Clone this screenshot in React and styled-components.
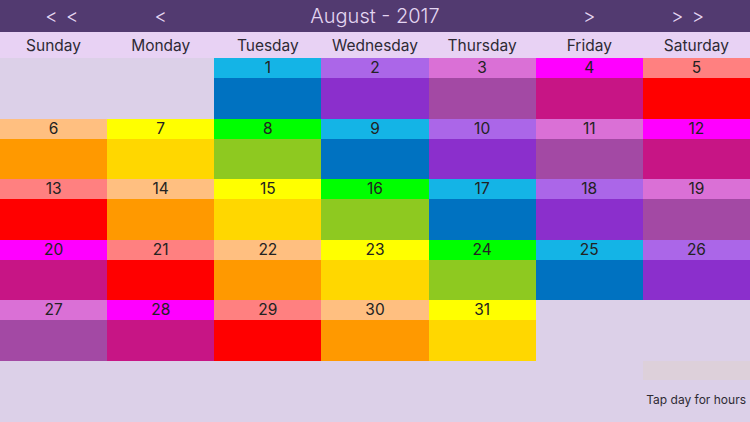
import React from "react";
import styled, { createGlobalStyle } from "styled-components";

const Global = createGlobalStyle`
  html, body { margin: 0; padding: 0; }
  body { background: #dcd0e8; font-family: Inter, "Noto Sans", "Liberation Sans", sans-serif; }
`;

const Page = styled.div`
  width: 750px;
  height: 422px;
  background: #dcd0e8;
  display: flex;
  flex-direction: column;
  overflow: hidden;
`;

const Header = styled.div`
  height: 32px;
  background: #523a70;
  display: grid;
  grid-template-columns: repeat(7, 1fr);
  align-items: center;
  color: #e4d6f2;
`;

const Nav = styled.div`
  text-align: center;
  font-size: 19px;
  font-weight: 300;
  letter-spacing: ${(p) => (p.$double ? "1.5px" : "0")};
  padding-top: 1px;
  padding-left: ${(p) => (p.$inset === "left" ? "18px" : "0")};
  padding-right: ${(p) => (p.$inset === "right" ? "16px" : "0")};
`;

const Title = styled.div`
  grid-column: span 3;
  text-align: center;
  font-size: 20px;
  font-weight: 300;
`;

const DayNames = styled.div`
  height: 26px;
  background: #e8d2f4;
  display: grid;
  grid-template-columns: repeat(7, 1fr);
  align-items: center;
`;

const DayName = styled.div`
  text-align: center;
  font-size: 15.5px;
  color: #2e2a34;
  padding-top: 1px;
`;

const Grid = styled.div`
  display: grid;
  grid-template-columns: repeat(7, 1fr);
  grid-auto-rows: 60.6px;
`;

const Cell = styled.div`
  display: flex;
  flex-direction: column;
`;

const CellTop = styled.div`
  height: 20px;
  background: ${(p) => p.$c};
  text-align: center;
  font-size: 15.5px;
  line-height: 20px;
  color: #222;
`;

const CellBody = styled.div`
  flex: 1;
  background: ${(p) => p.$c};
`;

const Footer = styled.div`
  display: grid;
  grid-template-columns: repeat(7, 1fr);
  grid-template-rows: 19px auto;
`;

const HoursBar = styled.div`
  grid-column: 7;
  background: #ddd0da;
`;

const Hint = styled.div`
  grid-column: 1 / -1;
  text-align: right;
  font-size: 12px;
  color: #2e2a34;
  padding: 12px 4px 0 0;
`;

const palette = [
  ["#14b4e6", "#0072c1"],
  ["#ab66e8", "#8b2fcc"],
  ["#da70d6", "#a349a4"],
  ["#ff00ff", "#c71585"],
  ["#ff8080", "#ff0000"],
  ["#ffbf80", "#ff9900"],
  ["#ffff00", "#ffd700"],
  ["#00ff00", "#8ec920"],
];

const days = ["Sunday", "Monday", "Tuesday", "Wednesday", "Thursday", "Friday", "Saturday"];

export default function App() {
  const cells = [];
  for (let i = 0; i < 2; i++) cells.push(null);
  for (let d = 1; d <= 31; d++) cells.push(d);
  return (
    <Page>
      <Global />
      <Header>
        <Nav $double $inset="left">&lt; &lt;</Nav>
        <Nav>&lt;</Nav>
        <Title>August - 2017</Title>
        <Nav>&gt;</Nav>
        <Nav $double $inset="right">&gt; &gt;</Nav>
      </Header>
      <DayNames>
        {days.map((d) => (
          <DayName key={d}>{d}</DayName>
        ))}
      </DayNames>
      <Grid>
        {cells.map((d, i) => {
          if (d === null) return <Cell key={"e" + i} />;
          const [top, body] = palette[(d - 1) % 8];
          return (
            <Cell key={d}>
              <CellTop $c={top}>{d}</CellTop>
              <CellBody $c={body} />
            </Cell>
          );
        })}
      </Grid>
      <Footer>
        <HoursBar />
        <Hint>Tap day for hours</Hint>
      </Footer>
    </Page>
  );
}
